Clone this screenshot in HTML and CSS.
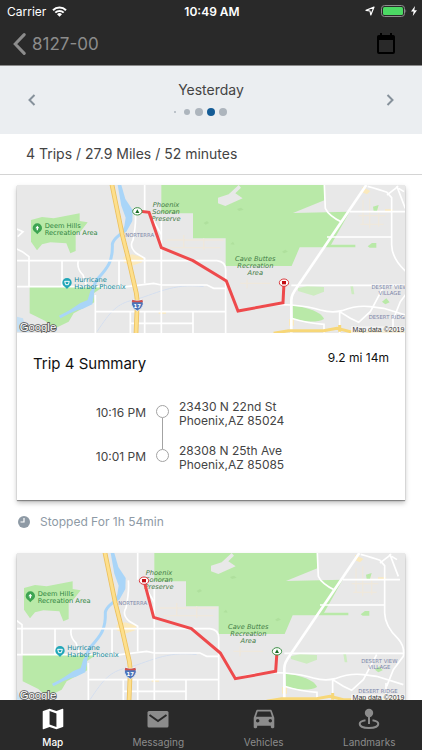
FILE: index.html
```
<!DOCTYPE html>
<html lang="en">
<head>
  <meta charset="UTF-8">
  <meta name="viewport" content="width=device-width, initial-scale=1">
  <title>8127-00 Trips</title>
  <link rel="stylesheet" href="styles.css">
</head>

<body>
  <!-- Shared map drawing -->
  <svg class="defs" aria-hidden="true">
    <defs>
      <g id="map-base">
        <rect x="0" y="0" width="1240" height="445" fill="#e8e8e8"/>
        <g fill="#b9e9a8">
          <path d="M42 105L75 96 110 100 188 85V108L212 112 190 140 176 145V198L160 205 148 175 100 172 75 178 60 196 42 170Z"/>
          <path d="M38 306H258L230 325 232 352 170 385 155 410 110 432 85 408 38 385Z"/>
          <path d="M433 0H922V46L828 84 998 80 938 187H848L824 243H626V160H528V85H433Z"/>
          <path d="M938 179H1015V187H938ZM1052 184L1065 174H1078V188H1058ZM1068 65L1085 60 1080 78H1070ZM1095 350L1108 340 1118 352 1105 358Z"/>
          <path d="M826 362C870 365 915 382 921 402 900 415 850 410 828 400Z"/>
        </g>
        <path d="M843 310L870 303 921 306V320L890 332 843 318ZM1000 302H1008L1012 328H1004Z" fill="#cdecc0"/>
        <path d="M603 38L635 28 665 0 672 8 655 25 677 40 625 63 603 55Z" fill="#e8e8e8"/>
        <path d="M560 114l10-6 6 6-10 5zM660 72l12-4 8 6-14 4zM640 178l8-8 5 9zM795 200l10-6 8 6-12 5z" fill="#afe09d"/>
        <g fill="none" stroke="#efe8dc" stroke-width="4">
          <path d="M450 165H620M460 188H610M500 150V188M560 160V195M1038 45V120M1058 40V130M1085 70V125M1025 92H1105M1030 118H1100M670 295H760M690 280V310"/>
        </g>
        <g fill="#fae9bd">
          <path d="M320 215L345 208 380 218 375 232 345 242 320 232ZM1035 5L1060 18 1050 28 1036 22ZM1104 73h24v8h-24zM816 402h15v20h-15zM425 378h22v8h-22zM1185 378l25-12v25z"/>
        </g>
        <!-- river -->
        <path d="M302 0L313 0 325 42 347 75 346 108 328 140 310 150 322 124 326 98 313 62Z" fill="#a9d5f8"/>
        <path d="M326 132C310 152 289 158 286 178 288 232 270 250 240 284 218 316 234 348 212 358 190 364 170 374 128 396" fill="none" stroke="#a9d5f8" stroke-width="9"/>
        <path d="M220 318L232 312 226 358 196 372 170 377 128 400 142 386 190 354 212 345Z" fill="#a9d5f8"/>
        <path d="M240 440C280 380 300 355 350 345 410 330 470 292 560 305" fill="none" stroke="#d5dfef" stroke-width="3"/>
        <path d="M0 395L18 400 25 425 40 440H0Z" fill="#c5dff3"/>
        <!-- streets -->
        <g fill="none" stroke="#fff" stroke-width="5">
          <path d="M-5 190L16 200 36 215V305M0 132L18 140 2 155M0 227H600Q626 230 626 255V445M0 305H210M135 228V305M184 227Q178 250 198 270L208 300"/>
          <path d="M383 0V80M355 82Q358 115 348 165 335 185 358 205L383 220V295M433 108V445M230 305H330L410 295 433 300H570L590 310H626M306 228V300M235 330V445M235 380H626M340 415H528M340 380V445M383 380V445M528 380V445"/>
          <path d="M396 82L412 112 433 148"/>
          <path d="M922 0 925 70Q935 92 975 112M930 156H1124M998 80H1170M1052 4Q1090 14 1110 22L1124 38V180Q1125 220 1164 257 1185 280 1180 310L1150 350 1130 400M1110 30Q1150 0 1140 5L1165 70M1161 20L1145 10"/>
          <path d="M823 301H1180M685 375Q740 355 823 360 880 365 910 375 945 385 975 377 1020 360 1060 365L1100 370 1180 395M968 378V445M968 380L1000 400 1025 412 1060 380 1100 305M1128 390V445M823 400Q870 415 921 418V445"/>
        </g>
        <path d="M1048 0L840 307Q823 330 823 345V445" fill="none" stroke="#fff" stroke-width="8"/>
        <!-- highways -->
        <path d="M284 -5L316 150 335 225 358 325 361 350 357 445" fill="none" stroke="#ecc15f" stroke-width="14"/>
        <path d="M284 -5L316 150 335 225 358 325 361 350 357 445" fill="none" stroke="#fddf8c" stroke-width="9"/>
        <path d="M770 445L815 437H920L960 430 1000 440H1180M968 420V440" fill="none" stroke="#f7d778" stroke-width="9"/>
        <!-- interstate shield -->
        <path d="M346 344Q361 350 376 344L379 357Q376 372 361 378 346 372 343 357Z" fill="#4c74b9" stroke="#fff" stroke-width="2"/>
        <path d="M346 344Q361 350 376 344L378 352H344Z" fill="#d0504d"/>
        <!-- place pins -->
        <path d="M61 115a14 14 0 0 1 14 14c0 9-9 12-14 19-5-7-14-10-14-19a14 14 0 0 1 14-14z" fill="#3da452"/>
        <path d="M61 122l6 8h-4v6h-4v-6h-4z" fill="#fff"/>
        <path d="M150 279a14 14 0 0 1 14 14c0 9-9 12-14 19-5-7-14-10-14-19a14 14 0 0 1 14-14z" fill="#22a7b8"/>
        <path d="M143 289h14l-3 10h-8z" fill="none" stroke="#fff" stroke-width="3"/>
      </g>
      <g id="pin-start">
        <ellipse rx="14" ry="11" fill="#fff" stroke="#3c8f45" stroke-width="3"/>
        <path d="M0 -6L6 5H-6Z" fill="#176b24"/>
      </g>
      <g id="pin-end">
        <ellipse rx="14" ry="11" fill="#fff" stroke="#d9383c" stroke-width="3"/>
        <rect x="-6" y="-5" width="12" height="10" fill="#c30d13"/>
      </g>
    </defs>
  </svg>

  <div class="app">
    <header class="topbar">
      <div class="status">
        <div class="status-left">
          <span>Carrier</span>
          <svg class="wifi" viewBox="0 0 15 11" aria-hidden="true">
            <path d="M1 4.2a9.2 9.2 0 0 1 13 0M3.3 6.6a6 6 0 0 1 8.4 0" fill="none" stroke="#fff" stroke-width="2"/>
            <path d="M5 8.2a3.6 3.6 0 0 1 5 0L7.5 10.8z" fill="#fff"/>
          </svg>
        </div>
        <div class="status-time">10:49 AM</div>
        <div class="status-right">
          <svg class="arrow" viewBox="0 0 10 10" aria-hidden="true">
            <path d="M9 1L5.8 9 5 5 1 4.4z" fill="none" stroke="#fff" stroke-width="1.2" stroke-linejoin="round"/>
          </svg>
          <svg class="battery" viewBox="0 0 26 12" aria-hidden="true">
            <rect x=".5" y=".5" width="23" height="11" rx="3" fill="none" stroke="#8c8c8c"/>
            <rect x="2" y="2" width="20" height="8" rx="1.5" fill="#4cd964"/>
            <path d="M24.5 4q1.5 2 0 4z" fill="#8c8c8c"/>
          </svg>
          <svg class="bolt" viewBox="0 0 6 10" aria-hidden="true">
            <path d="M4 0L0 5.6h2.6L1.8 10 6 4.2H3.3z" fill="#fff"/>
          </svg>
        </div>
      </div>
      <div class="nav">
        <button class="back" type="button">
          <svg viewBox="0 0 13 22" aria-hidden="true">
            <path d="M11.2 1.6L2.2 11l9 9.4" fill="none" stroke="currentColor" stroke-width="3" stroke-linecap="round"/>
          </svg>
          8127-00
        </button>
        <button class="calendar" type="button" aria-label="Pick a date">
          <svg viewBox="0 0 18 21" aria-hidden="true">
            <path d="M3 0h2v2h8V0h2v2h1.2q1.8 0 1.8 1.8V19q0 2-2 2H2q-2 0-2-2V3.8Q0 2 1.8 2H3zM2 7v12h14V7z" fill="#000" fill-rule="evenodd"/>
          </svg>
        </button>
      </div>
    </header>

    <main class="content">
      <!-- DAY PICKER -->
      <section class="day">
        <button class="day-btn" type="button" aria-label="Previous day">
          <svg viewBox="0 0 8 12" aria-hidden="true"><path d="M6.5 1L1.5 6l5 5"/></svg>
        </button>
        <div class="day-center">
          <div class="day-name">Yesterday</div>
          <div class="dots">
            <span class="dot tiny"></span>
            <span class="dot small"></span>
            <span class="dot"></span>
            <span class="dot active"></span>
            <span class="dot"></span>
          </div>
        </div>
        <button class="day-btn" type="button" aria-label="Next day">
          <svg viewBox="0 0 8 12" aria-hidden="true"><path d="M1.5 1l5 5-5 5"/></svg>
        </button>
      </section>

      <div class="totals">4 Trips / 27.9 Miles / 52 minutes</div>

      <!-- TRIP 4 -->
      <article class="card">
        <svg class="map" viewBox="0 0 1164 445" role="img" aria-label="Trip 4 map">
          <use href="#map-base"/>
          <g class="map-park">
            <text x="83" y="130">Deem Hills</text>
            <text x="83" y="151">Recreation Area</text>
          </g>
          <g class="map-poi">
            <text x="172" y="292">Hurricane</text>
            <text x="172" y="313">Harbor Phoenix</text>
          </g>
          <g class="map-reserve">
            <text x="447" y="67">Phoenix</text>
            <text x="447" y="88">Sonoran</text>
            <text x="447" y="109">Preserve</text>
            <text x="715" y="227">Cave Buttes</text>
            <text x="715" y="248">Recreation</text>
            <text x="715" y="269">Area</text>
          </g>
          <g class="map-area">
            <text x="368" y="156">NORTERRA</text>
            <text x="1118" y="312">DESERT VIEW</text>
            <text x="1118" y="329">VILLAGE</text>
            <text x="1114" y="403">DESERT RIDGE</text>
          </g>
          <text class="map-shield" x="361" y="369">17</text>
          <path class="route" d="M363 78L396 82 433 188 528 227 610 277 628 288 663 378 798 353 801 293"/>
          <use href="#pin-start" x="361" y="79"/>
          <use href="#pin-end" x="801" y="293"/>
          <rect x="1002" y="424" width="162" height="21" fill="#f5f5f5" opacity=".8"/>
          <text class="map-copy" x="1162" y="441">Map data ©2019</text>
          <text class="map-logo" x="8" y="437">Google</text>
        </svg>

        <div class="card-body">
          <div class="card-head">
            <h2 class="card-title">Trip 4 Summary</h2>
            <div class="card-stats">9.2 mi 14m</div>
          </div>
          <ol class="stops">
            <li class="stop">
              <time class="stop-time">10:16 PM</time>
              <span class="stop-mark"></span>
              <div class="stop-place">23430 N 22nd St<br>Phoenix,AZ 85024</div>
            </li>
            <li class="stop">
              <time class="stop-time">10:01 PM</time>
              <span class="stop-mark"></span>
              <div class="stop-place">28308 N 25th Ave<br>Phoenix,AZ 85085</div>
            </li>
          </ol>
        </div>
      </article>

      <div class="stopped">
        <svg viewBox="0 0 12 12" aria-hidden="true">
          <circle cx="6" cy="6" r="6" fill="#8e9aa5"/>
          <path d="M6 2v4H2.5" fill="none" stroke="#fff" stroke-width="1.2"/>
        </svg>
        Stopped For 1h 54min
      </div>

      <!-- TRIP 3 -->
      <article class="card">
        <svg class="map" viewBox="0 0 1164 445" role="img" aria-label="Trip 3 map">
          <use href="#map-base" x="-21"/>
          <g class="map-park">
            <text x="62" y="130">Deem Hills</text>
            <text x="62" y="151">Recreation Area</text>
          </g>
          <g class="map-poi">
            <text x="151" y="292">Hurricane</text>
            <text x="151" y="313">Harbor Phoenix</text>
          </g>
          <g class="map-reserve">
            <text x="426" y="67">Phoenix</text>
            <text x="426" y="88">Sonoran</text>
            <text x="426" y="109">Preserve</text>
            <text x="694" y="227">Cave Buttes</text>
            <text x="694" y="248">Recreation</text>
            <text x="694" y="269">Area</text>
          </g>
          <g class="map-area">
            <text x="347" y="156">NORTERRA</text>
            <text x="1087" y="330">DESERT VIEW</text>
            <text x="1087" y="347">VILLAGE</text>
            <text x="1083" y="420">DESERT RIDGE</text>
          </g>
          <text class="map-shield" x="340" y="369">17</text>
          <path class="route" d="M381 83L410 193 523 227 610 300 655 377 776 355 780 295"/>
          <use href="#pin-end" x="381" y="83"/>
          <use href="#pin-start" x="780" y="295"/>
          <rect x="1002" y="424" width="162" height="21" fill="#f5f5f5" opacity=".8"/>
          <text class="map-copy" x="1162" y="441">Map data ©2019</text>
          <text class="map-logo" x="8" y="437">Google</text>
        </svg>
      </article>
    </main>

    <nav class="tabs">
      <a class="tab active" href="#map">
        <svg viewBox="1.5 1.5 21 21" aria-hidden="true">
          <path d="M20.5 3l-.16.03L15 5.1 9 3 3.36 4.9c-.21.07-.36.25-.36.48V20.5c0 .28.22.5.5.5l.16-.03L9 18.9l6 2.1 5.64-1.9c.21-.07.36-.25.36-.48V3.5c0-.28-.22-.5-.5-.5zM15 19l-6-2.11V5l6 2.11V19z" fill="currentColor"/>
        </svg>
        Map
      </a>
      <a class="tab" href="#messaging">
        <svg viewBox="0 0 24 24" aria-hidden="true">
          <rect x="1.5" y="4" width="21" height="16.5" rx="1.5" fill="currentColor"/>
          <path d="M3.5 8l8.5 6 8.5-6" fill="none" stroke="#292929" stroke-width="2"/>
        </svg>
        Messaging
      </a>
      <a class="tab" href="#vehicles">
        <svg viewBox="1.5 2.5 21 21" aria-hidden="true">
          <path d="M18.92 6.01C18.72 5.42 18.16 5 17.5 5h-11c-.66 0-1.21.42-1.42 1.01L3 12v8c0 .55.45 1 1 1h1c.55 0 1-.45 1-1v-1h12v1c0 .55.45 1 1 1h1c.55 0 1-.45 1-1v-8l-2.08-5.99zM6.5 16c-.83 0-1.5-.67-1.5-1.5S5.67 13 6.5 13s1.5.67 1.5 1.5S7.33 16 6.5 16zm11 0c-.83 0-1.5-.67-1.5-1.5s.67-1.5 1.5-1.5 1.5.67 1.5 1.5-.67 1.5-1.5 1.5zM5 11l1.5-4.5h11L19 11H5z" fill="currentColor"/>
        </svg>
        Vehicles
      </a>
      <a class="tab" href="#landmarks">
        <svg viewBox="0 0 24 24" aria-hidden="true">
          <circle cx="12" cy="6" r="4.2" fill="currentColor"/>
          <path d="M12 8v9" stroke="currentColor" stroke-width="2"/>
          <path d="M8.5 13.3C5 13.8 2.7 15.2 2.7 17c0 2.4 4 4 9.3 4s9.3-1.6 9.3-4c0-1.8-2.3-3.2-5.8-3.7" fill="none" stroke="currentColor" stroke-width="2"/>
        </svg>
        Landmarks
      </a>
    </nav>
  </div>
</body>
</html>
```
FILE: styles.css
```
/* ===============================
   BASE
=============================== */
* {
  box-sizing: border-box;
}
html, body {
  margin: 0;
  padding: 0;
  height: 100%;
}
body {
  font-family: Inter, "Liberation Sans", sans-serif;
  font-size: 14px;
  color: #444;
  background: #fff;
}
button {
  padding: 0;
  border: 0;
  background: none;
  font: inherit;
  color: inherit;
  cursor: pointer;
}
svg {
  display: block;
}
.defs {
  position: absolute;
  width: 0;
  height: 0;
}
.app {
  display: flex;
  flex-direction: column;
  height: 100vh;
}

/* ===============================
   TOP BAR
=============================== */
.topbar {
  flex: none;
  background: #292929;
  border-bottom: 1px solid #8a8a8a;
}
.status {
  display: grid;
  grid-template-columns: 1fr auto 1fr;
  align-items: center;
  height: 22px;
  padding: 0 5px 0 7px;
  font-size: 12px;
  color: #fff;
}
.status-left,
.status-right {
  display: flex;
  align-items: center;
  gap: 6px;
}
.status-right {
  justify-content: flex-end;
  gap: 4px;
}
.status-time {
  font-weight: 600;
}
.wifi {
  width: 15px;
  height: 11px;
}
.arrow {
  width: 10px;
  height: 10px;
  margin-right: 2px;
}
.battery {
  width: 26px;
  height: 12px;
}
.bolt {
  width: 6px;
  height: 10px;
}
.nav {
  display: flex;
  align-items: center;
  justify-content: space-between;
  height: 43px;
  padding: 0 27px 0 13px;
}
.back {
  display: flex;
  align-items: center;
  gap: 6px;
  font-size: 17px;
  color: #8c8c8c;
}
.back svg {
  width: 13px;
  height: 22px;
}
.calendar svg {
  width: 18px;
  height: 21px;
}

/* ===============================
   DAY PICKER
=============================== */
.content {
  flex: 1;
  min-height: 0;
  overflow-y: auto;
  scrollbar-width: none;
}
.day {
  display: flex;
  align-items: center;
  justify-content: space-between;
  height: 68px;
  padding: 0 28px;
  background: #ebeef1;
}
.day-btn svg {
  width: 8px;
  height: 12px;
  fill: none;
  stroke: #86919b;
  stroke-width: 2;
}
.day-center {
  display: flex;
  flex-direction: column;
  align-items: center;
  gap: 8px;
  padding-bottom: 4px;
}
.day-name {
  line-height: 20px;
}
.dots {
  display: flex;
  align-items: center;
  gap: 4px;
  height: 8px;
  padding-right: 24px;
}
.dot {
  width: 8px;
  height: 8px;
  border-radius: 50%;
  background: #adb5bd;
}
.dot.small {
  width: 6px;
  height: 6px;
  margin: 0 1px;
}
.dot.tiny {
  width: 2px;
  height: 2px;
  margin: 0 3px;
}
.dot.active {
  background: #145c96;
}
.totals {
  height: 41px;
  padding: 0 26px;
  line-height: 40px;
  border-bottom: 1px solid #d4d4d4;
}

/* ===============================
   TRIP CARDS
=============================== */
.card {
  margin: 10px 17px 0;
  background: #fff;
  box-shadow: 0 1px 1px rgba(0, 0, 0, 0.35), 0 3px 5px rgba(0, 0, 0, 0.25);
}
.map {
  width: 100%;
  height: auto;
}
.card-body {
  padding: 17px 16px 26px;
}
.card-head {
  display: flex;
  justify-content: space-between;
  color: #111;
}
.card-title {
  margin: 4px 0 0;
  font-size: 15px;
  font-weight: 400;
  line-height: 20px;
}
.card-stats {
  font-size: 12px;
  line-height: 16px;
}
.stops {
  margin: 26px 0 0;
  padding: 0;
  list-style: none;
  font-size: 12px;
  line-height: 14px;
}
.stop {
  display: grid;
  grid-template-columns: 113px 11px 1fr;
  column-gap: 11px;
  align-items: stretch;
  height: 44px;
}
.stop:last-child {
  height: 30px;
}
.stop-time {
  padding-top: 6px;
  text-align: right;
}
.stop-mark {
  display: flex;
  flex-direction: column;
  align-items: center;
  padding-top: 5px;
}
.stop-mark::before {
  content: '';
  flex: none;
  width: 11px;
  height: 11px;
  border: 1px solid #a3a3a3;
  border-radius: 50%;
}
.stop-mark::after {
  content: '';
  flex: 1;
  width: 1px;
  margin-bottom: -5px;
  background: #a3a3a3;
}
.stop:last-child .stop-mark::after {
  display: none;
}
.stopped {
  display: flex;
  align-items: center;
  gap: 10px;
  height: 43px;
  padding: 0 18px;
  font-size: 12px;
  color: #8e9aa5;
}
.stopped svg {
  width: 12px;
  height: 12px;
}

/* ===============================
   MAP LABELS
=============================== */
.map text {
  font-family: "DejaVu Sans", sans-serif;
  font-size: 20px;
}
.map-park {
  fill: #2e8540;
}
.map-poi {
  fill: #16899a;
}
.map-reserve {
  fill: #3f7a45;
  font-style: italic;
  text-anchor: middle;
}
.map .map-area text {
  font-size: 16px;
  fill: #7d87a8;
  text-anchor: middle;
}
.map .map-shield {
  font-size: 16px;
  font-weight: 700;
  fill: #fff;
  text-anchor: middle;
}
.map .map-copy {
  font-family: "Liberation Sans", sans-serif;
  font-size: 21px;
  fill: #333;
  text-anchor: end;
}
.map .map-logo {
  font-family: "Liberation Sans", sans-serif;
  font-size: 34px;
  fill: #fff;
  stroke: #555;
  stroke-width: 5px;
  paint-order: stroke;
}
.route {
  fill: none;
  stroke: #ee4a4c;
  stroke-width: 9px;
}

/* ===============================
   TAB BAR
=============================== */
.tabs {
  flex: none;
  display: grid;
  grid-template-columns: repeat(4, 1fr);
  height: 50px;
  background: #292929;
}
.tab {
  display: flex;
  flex-direction: column;
  align-items: center;
  gap: 4px;
  padding-top: 7px;
  font-size: 10px;
  line-height: 14px;
  color: #8c8c8c;
  text-decoration: none;
}
.tab svg {
  width: 24px;
  height: 24px;
}
.tab.active {
  color: #fff;
  font-weight: 500;
}
```
